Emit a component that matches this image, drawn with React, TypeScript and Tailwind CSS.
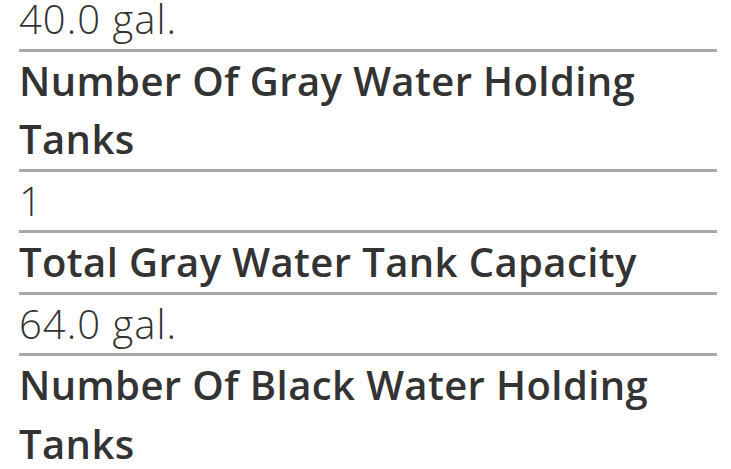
export default function App() {
  const rows: { label?: string; value?: string }[] = [
    { value: "40.0 gal." },
    { label: "Number Of Gray Water Holding Tanks" },
    { value: "1" },
    { label: "Total Gray Water Tank Capacity" },
    { value: "64.0 gal." },
    { label: "Number Of Black Water Holding Tanks" },
  ]

  return (
    <div className="min-h-screen bg-white overflow-hidden" style={{ fontFamily: '"Open Sans", "Noto Sans", sans-serif' }}>
      <div className="ml-[19px] mr-[14px] -mt-[10px] text-[#333333]">
        {rows.map((row, i) => (
          <div key={i} className={i < rows.length - 1 ? "border-b-[3px] border-[#a9a9a9]" : ""}>
            {row.label ? (
              <div className="text-[40px] leading-[58.5px] font-semibold tracking-[0.4px]">{row.label}</div>
            ) : (
              <div className="text-[40px] leading-[58.5px] font-light tracking-[1px]">{row.value}</div>
            )}
          </div>
        ))}
      </div>
    </div>
  )
}
